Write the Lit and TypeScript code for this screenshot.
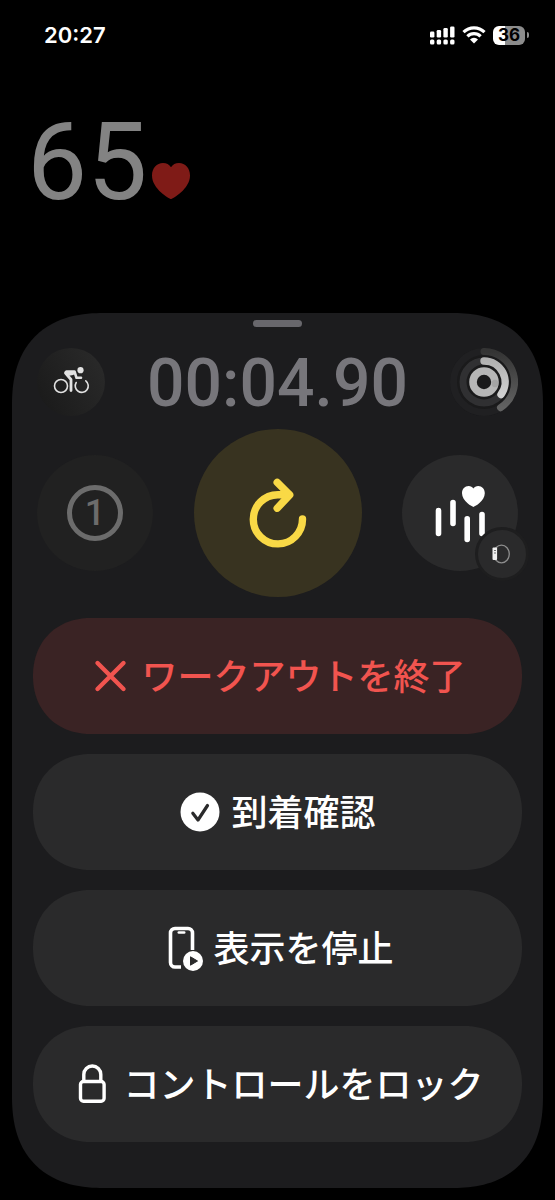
import { LitElement, html, css, svg } from "lit";
import { customElement, property } from "lit/decorators.js";

const HEART =
  "M19 36C17.400 36 0 26 0 12.500 0 5 4.800 0 11 0 14.400 0 17.400 1.600 19 4.200 20.600 1.600 23.600 0 27 0 33.200 0 38 5 38 12.500 38 26 20.600 36 19 36Z";

const crossIcon = svg`<path d="M10.500 10L36.500 36M36.500 10L10.500 36" fill="none" stroke="currentColor" stroke-width="4.400" stroke-linecap="round"/>`;

const checkIcon = svg`
  <circle cx="23" cy="23" r="19.5" fill="currentColor"/>
  <path d="M15.800 24.300L21 31L30.500 16.500" fill="none" stroke="#2a2a2b" stroke-width="3.200" stroke-linecap="round" stroke-linejoin="round"/>`;

const phoneIcon = svg`
  <path d="M22 42H16A4.500 4.500 0 0 1 11.500 37.500V8A4.500 4.500 0 0 1 16 3.500H29A4.500 4.500 0 0 1 33.500 8V25" fill="none" stroke="currentColor" stroke-width="3.600"/>
  <path d="M19.800 7.500H25.200" stroke="currentColor" stroke-width="2.600" stroke-linecap="round"/>
  <circle cx="34" cy="36" r="10" fill="currentColor"/>
  <path d="M31.500 31.800V40.200L38.500 36Z" fill="#2a2a2b" stroke="#2a2a2b" stroke-width="1" stroke-linejoin="round"/>`;

const lockIcon = svg`
  <rect x="11.500" y="20.500" width="23.600" height="19.800" rx="3" fill="none" stroke="currentColor" stroke-width="3.400"/>
  <path d="M14.800 20V13.500A8.500 8.500 0 0 1 31.800 13.500V20" fill="none" stroke="currentColor" stroke-width="3.400"/>`;

@customElement("action-button")
export class ActionButton extends LitElement {
  @property() label = "";
  @property() tone = "plain";
  @property({ attribute: false }) icon: unknown = null;

  static styles = css`
    :host {
      display: block;
    }
    .action {
      display: flex;
      width: 100%;
      height: 116px;
      align-items: center;
      justify-content: center;
      gap: 8px;
      padding: 0 2px 0 0;
      border: 0;
      border-radius: 58px;
      corner-shape: superellipse(1.1);
      background: #2a2a2b;
      color: #fff;
      font: 500 36px/48px "Noto Sans CJK JP", sans-serif;
      white-space: nowrap;
      cursor: pointer;
    }
    .action.danger {
      background: #3a2324;
      color: #f1544f;
    }
    .glyph {
      width: 46px;
      height: 46px;
      flex: none;
    }
    .label {
      padding-bottom: 4px;
    }
  `;

  render() {
    return html`<button class="action ${this.tone}" type="button">
      <svg class="glyph" viewBox="0 0 46 46" aria-hidden="true">${this.icon}</svg>
      <span class="label">${this.label}</span>
    </button>`;
  }
}

@customElement("app-root")
export class AppRoot extends LitElement {
  static styles = css`
    :host {
      display: block;
      min-height: 100vh;
      box-sizing: border-box;
      padding-bottom: 12px;
      background: #000;
      color: #fff;
      font-family: Roboto, sans-serif;
    }
    * {
      box-sizing: border-box;
    }
    svg {
      display: block;
      flex: none;
    }
    button {
      padding: 0;
      border: 0;
      color: inherit;
      cursor: pointer;
    }
    .status {
      display: flex;
      height: 70px;
      align-items: center;
      justify-content: space-between;
      padding: 0 26px 0 44px;
    }
    .clock {
      font: 600 22px/28px Inter, sans-serif;
    }
    .indicators {
      display: flex;
      align-items: center;
      gap: 7px;
    }
    .battery {
      display: flex;
      align-items: center;
      gap: 2px;
    }
    .cell {
      width: 32px;
      height: 19px;
      border-radius: 6px;
      background: linear-gradient(90deg, #fff 36%, #8c8c8c 36%);
      color: #000;
      font: 700 17px/19px Inter, sans-serif;
      text-align: center;
    }
    .nub {
      width: 2px;
      height: 6px;
      border-radius: 0 2px 2px 0;
      background: #8c8c8c;
    }
    .pulse {
      display: flex;
      height: 243px;
      align-items: flex-start;
      gap: 5px;
      padding: 28px 27px 0;
    }
    .bpm {
      color: #838383;
      font-size: 107px;
      line-height: 130px;
    }
    .heart {
      margin-top: 65px;
    }
    .panel {
      display: flex;
      flex-direction: column;
      margin: 0 12px;
      padding: 7px 21px 46px;
      border-radius: 92px;
      corner-shape: superellipse(1.25);
      background: #1c1c1e;
    }
    .handle {
      width: 49px;
      height: 7px;
      align-self: center;
      border-radius: 4px;
      background: #68676c;
    }
    .summary,
    .controls {
      display: flex;
      align-items: center;
      justify-content: space-between;
      padding: 0 4px;
    }
    .summary {
      margin-top: 21px;
    }
    .controls {
      margin: 13px 0 21px;
    }
    .small {
      width: 68px;
      height: 68px;
      border-radius: 50%;
      background: linear-gradient(60deg, #191919, #2b2b2b);
    }
    .timer {
      padding-top: 4px;
      color: #77767b;
      font-size: 66px;
      font-weight: 500;
      line-height: 64px;
    }
    .round {
      display: grid;
      width: 116px;
      height: 116px;
      place-items: center;
      border-radius: 50%;
      background: #2a2a2b;
    }
    .lap {
      background: #212121;
    }
    .lap-number {
      display: block;
      width: 56px;
      height: 56px;
      border: 5px solid #6c6c6c;
      border-radius: 50%;
      color: #6c6c6c;
      font: 500 36px/46px Roboto, sans-serif;
      text-align: center;
    }
    .resume {
      width: 168px;
      height: 168px;
      background: #383320;
    }
    .metrics {
      position: relative;
    }
    .badge {
      position: absolute;
      right: -11px;
      bottom: -10px;
      border: 3px solid #1e1e1f;
      border-radius: 50%;
      background: #2a2a2b;
    }
    .actions {
      display: grid;
      gap: 20px;
    }
  `;

  private statusBar() {
    return html`<header class="status">
      <time class="clock">20:27</time>
      <div class="indicators">
        <svg width="25" height="19" viewBox="0 0 25 19" fill="#fff" aria-hidden="true">
          <rect x="0" y="5.500" width="4.400" height="6" rx="1.300" />
          <rect x="6.700" y="4" width="4.400" height="7.500" rx="1.300" />
          <rect x="13.400" y="2" width="4.400" height="9.500" rx="1.300" />
          <rect x="20.100" y="0.500" width="4.400" height="11" rx="1.300" />
          <rect x="0" y="13.500" width="4.400" height="5" rx="1.500" />
          <rect x="6.700" y="13.500" width="4.400" height="5" rx="1.500" />
          <rect x="13.400" y="13.500" width="4.400" height="5" rx="1.500" />
          <rect x="20.100" y="13.500" width="4.400" height="5" rx="1.500" />
        </svg>
        <svg width="24" height="18" viewBox="0 0 24 18" aria-hidden="true">
          <path d="M1.500 6.200A15 15 0 0 1 22.500 6.200M5.400 10.300A9.300 9.300 0 0 1 18.600 10.300" fill="none" stroke="#fff" stroke-width="3.200" />
          <path d="M12 17.500L8 13.400A5.400 5.400 0 0 1 16 13.400Z" fill="#fff" />
        </svg>
        <div class="battery">
          <div class="cell">36</div>
          <div class="nub"></div>
        </div>
      </div>
    </header>`;
  }

  render() {
    return html`
      ${this.statusBar()}
      <section class="pulse">
        <span class="bpm">65</span>
        <svg class="heart" width="38" height="36" viewBox="0 0 38 36" aria-hidden="true">
          <path d=${HEART} fill="#7f1b17" />
        </svg>
      </section>
      <main class="panel">
        <div class="handle"></div>
        <div class="summary">
          <button class="small" type="button" aria-label="サイクリング">
            <svg width="68" height="68" viewBox="0 0 68 68" fill="none" stroke="#e2e2e2" stroke-linecap="round" stroke-linejoin="round">
              <circle cx="24" cy="38" r="6.500" stroke-width="1.600" />
              <path d="M48.800 32.800A6.500 6.500 0 1 1 39.200 34.500" stroke-width="1.600" />
              <path d="M29.500 23.500H37.500L39.500 29.800H44" stroke-width="2.600" />
              <path d="M28.500 24L30.500 27L36 26L37 24Z" fill="#e2e2e2" stroke-width="2" />
              <path d="M28.500 25L34 31.500V42.500" stroke-width="2.800" />
              <circle cx="43.500" cy="22.200" r="3.100" fill="#e2e2e2" stroke="none" />
            </svg>
          </button>
          <time class="timer">00:04.90</time>
          <svg width="68" height="68" viewBox="0 0 68 68" fill="none" stroke-linecap="round" aria-hidden="true">
            <defs>
              <linearGradient id="outer" x1="0" y1="0" x2="0" y2="1">
                <stop offset="0" stop-color="#343434" />
                <stop offset="1" stop-color="#626262" />
              </linearGradient>
              <linearGradient id="middle" x1="0" y1="0" x2="0" y2="1">
                <stop offset="0" stop-color="#b2b2b2" />
                <stop offset="1" stop-color="#d0d0d0" />
              </linearGradient>
            </defs>
            <circle cx="34" cy="34" r="34" fill="#1a1a1b" />
            <circle cx="34" cy="34" r="30.500" stroke="#202022" stroke-width="7" />
            <path d="M34 3.500A30.500 30.500 0 0 1 50.500 59.700" stroke="url(#outer)" stroke-width="7" />
            <circle cx="34" cy="34" r="21" stroke="#303032" stroke-width="7" />
            <path d="M34 13A21 21 0 0 1 51 46.500" stroke="url(#middle)" stroke-width="7.400" />
            <circle cx="34" cy="34" r="11" stroke="#b6b6b6" stroke-width="7.600" />
            <path d="M45 35V36" stroke="#a4a4a4" stroke-width="6.500" />
          </svg>
        </div>
        <div class="controls">
          <button class="round lap" type="button" aria-label="区間">
            <span class="lap-number">1</span>
          </button>
          <button class="round resume" type="button" aria-label="再開">
            <svg width="84" height="84" viewBox="0 0 84 84" fill="none" stroke="#f9d946" stroke-width="7.400" stroke-linecap="round" stroke-linejoin="round">
              <path d="M66.500 48A24.600 24.600 0 1 1 41.900 23.700H53" />
              <path d="M41.200 11.400L53.700 23.900L41.200 37.200" />
            </svg>
          </button>
          <button class="round metrics" type="button" aria-label="心拍数">
            <svg width="84" height="84" viewBox="-1 0 84 84">
              <path d="M19.500 39.500V62.500M34 31.500V52.500M48.200 47.700V68.500M63 43.500V62.500" fill="none" stroke="#fff" stroke-width="5.600" stroke-linecap="round" />
              <path d=${HEART} fill="#fff" transform="translate(43 15) scale(0.600 0.580)" />
            </svg>
            <svg class="badge" width="54" height="54" viewBox="0 0 48 48">
              <ellipse cx="23.500" cy="24" rx="7.800" ry="8.800" fill="none" stroke="#8d8d8d" stroke-width="1.300" />
              <rect x="14.500" y="17.500" width="4.600" height="12.500" rx="1" fill="#f0f0f0" />
              <path d="M16.200 20.500H17.800M16.200 23H17.800" stroke="#555" stroke-width="1" />
            </svg>
          </button>
        </div>
        <div class="actions">
          <action-button tone="danger" label="ワークアウトを終了" .icon=${crossIcon}></action-button>
          <action-button label="到着確認" .icon=${checkIcon}></action-button>
          <action-button label="表示を停止" .icon=${phoneIcon}></action-button>
          <action-button label="コントロールをロック" .icon=${lockIcon}></action-button>
        </div>
      </main>
    `;
  }
}
